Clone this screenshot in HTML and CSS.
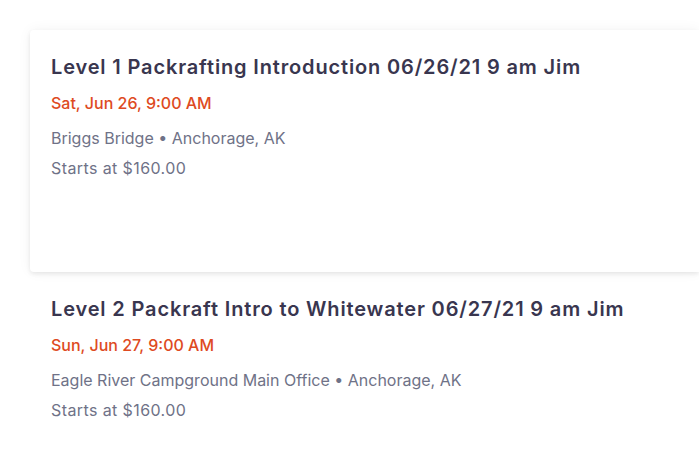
FILE: index.html
```html
<!DOCTYPE html>
<html>
<head>
<meta charset="utf-8">
<link rel="stylesheet" href="styles.css">
</head>
<body>
<div class="list">
  <div class="event card">
    <h3 class="title">Level 1 Packrafting Introduction 06/26/21 9 am Jim</h3>
    <div class="date">Sat, Jun 26, 9:00 AM</div>
    <div class="meta">Briggs Bridge • Anchorage, AK</div>
    <div class="meta price">Starts at $160.00</div>
  </div>
  <div class="event plain">
    <h3 class="title">Level 2 Packraft Intro to Whitewater 06/27/21 9 am Jim</h3>
    <div class="date">Sun, Jun 27, 9:00 AM</div>
    <div class="meta">Eagle River Campground Main Office • Anchorage, AK</div>
    <div class="meta price">Starts at $160.00</div>
  </div>
</div>
</body>
</html>
```

FILE: styles.css
```css
html, body {
  margin: 0;
  padding: 0;
  background: #ffffff;
  overflow: hidden;
}
body {
  font-family: Inter, "Noto Sans", sans-serif;
  width: 699px;
  height: 466px;
}
.list {
  padding: 30px 0 0 30px;
  display: flex;
  flex-direction: column;
}
.event {
  box-sizing: border-box;
  padding: 24px 0 0 21px;
  white-space: nowrap;
}
.card {
  height: 242px;
  background: #fff;
  border-radius: 4px 0 0 4px;
  box-shadow: 0 2px 4px rgba(0,0,0,0.08), 0 0 14px rgba(0,0,0,0.05);
}
.plain {
  padding-bottom: 20px;
}
.title {
  margin: 0;
  font-size: 20px;
  line-height: 26px;
  font-weight: 600;
  letter-spacing: 0.85px;
  color: #39364f;
}
.date {
  margin-top: 13px;
  font-size: 16px;
  line-height: 20px;
  font-weight: 500;
  color: #de4a22;
}
.meta {
  margin-top: 15px;
  font-size: 16px;
  line-height: 20px;
  color: #6f7287;
}
.price {
  margin-top: 10px;
  letter-spacing: 0.4px;
}
```
